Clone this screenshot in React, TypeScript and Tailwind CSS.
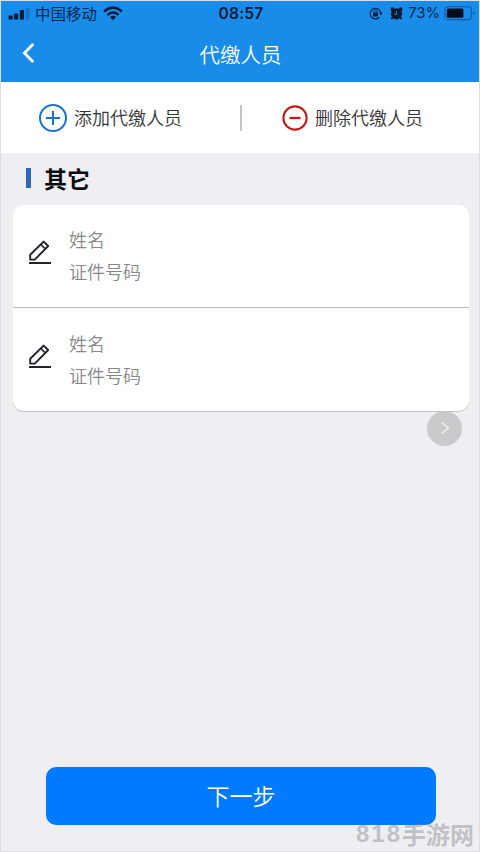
interface Person {
  id: number;
  name: string;
  idNumber: string;
}

const people: Person[] = [
  { id: 1, name: '姓名', idNumber: '证件号码' },
  { id: 2, name: '姓名', idNumber: '证件号码' },
];

function SignalIcon() {
  return (
    <svg width="22" height="12" viewBox="0 0 22 12" className="shrink-0">
      <rect x="0.5" y="7.5" width="4.2" height="4" rx="0.6" fill="#061a3a" />
      <rect x="6" y="5.5" width="4.2" height="6" rx="0.6" fill="#061a3a" />
      <rect x="11.8" y="2" width="4.2" height="9.5" rx="0.6" fill="#061a3a" />
      <rect x="17.8" y="0.3" width="3.4" height="11.2" rx="0.6" fill="#1672c4" />
    </svg>
  );
}

function WifiIcon() {
  return (
    <svg width="20" height="15" viewBox="0 0 20 15" fill="none" stroke="#061a3a" className="shrink-0">
      <path d="M1.2 5.6 C6 0.3 14 0.3 18.8 5.6" strokeWidth="2.5" />
      <path d="M4.4 9 C7.6 5.6 12.4 5.6 15.6 9" strokeWidth="2.4" />
      <path d="M10 14.3 L6.9 11.1 C8.6 9.4 11.4 9.4 13.1 11.1 Z" fill="#061a3a" stroke="none" />
    </svg>
  );
}

function RotationLockIcon() {
  return (
    <svg width="14" height="13" viewBox="0 0 14 13" fill="none" stroke="#0a2546" className="shrink-0">
      <path d="M10.4 10.3 A5.3 5.3 0 1 1 11.8 6.2" strokeWidth="1.3" />
      <path d="M9.8 5.6 H13.8 L11.8 8.6 Z" fill="#0a2546" stroke="none" />
      <rect x="4" y="5.5" width="5" height="3.9" rx="0.5" fill="#0a2546" stroke="none" />
      <path d="M5 6 V4.7 A1.5 1.5 0 0 1 8 4.7 V6" strokeWidth="1" />
    </svg>
  );
}

function AlarmIcon() {
  return (
    <svg width="13" height="13" viewBox="0 0 13 13" className="shrink-0">
      <circle cx="6.5" cy="6.8" r="5.6" fill="#051a30" />
      <circle cx="2.4" cy="2.2" r="1.9" fill="#051a30" />
      <circle cx="10.6" cy="2.2" r="1.9" fill="#051a30" />
      <path d="M2.6 10.4 L1.4 12.3 M10.4 10.4 L11.6 12.3" stroke="#051a30" strokeWidth="1.7" />
      <path d="M6.6 4 V7.2 H4" fill="none" stroke="#5d91bd" strokeWidth="0.9" />
    </svg>
  );
}

function BatteryIcon() {
  return (
    <svg width="32" height="15" viewBox="0 0 32 15" className="shrink-0">
      <rect x="0.8" y="0.8" width="26.6" height="12.8" rx="3.4" fill="none" stroke="#135b9f" strokeWidth="1.1" />
      <rect x="2.8" y="2.6" width="16.6" height="9.2" rx="1.4" fill="#010c1c" />
      <path d="M29.2 5.1 C31 5.8 31 8.4 29.2 9.2 Z" fill="#135b9f" />
    </svg>
  );
}

function EditIcon() {
  return (
    <svg width="24" height="26" viewBox="0 0 24 26" fill="none" stroke="#23232b" className="shrink-0">
      <path d="M2.2 20.6 V15.8 L15.6 2.6 L20.2 7 L6.8 20.6 Z" strokeWidth="1.9" strokeLinejoin="round" />
      <path d="M12.8 5.4 L17.2 9.8" strokeWidth="1.6" />
      <path d="M1 24 H23" strokeWidth="2" />
    </svg>
  );
}

function StatusBar() {
  return (
    <div className="grid h-[25px] grid-cols-[1fr_auto_1fr] items-center pr-[3px] pl-[7px] text-[15px] leading-none text-[#07264d]">
      <div className="flex items-center">
        <SignalIcon />
        <span className="ml-[5px] text-[15.5px]">中国移动</span>
        <span className="ml-[6px]">
          <WifiIcon />
        </span>
      </div>
      <span className="mr-[2px] font-[Inter] text-[15.5px] font-semibold tracking-[0.2px] text-[#061a3a]">
        08:57
      </span>
      <div className="flex items-center justify-end">
        <RotationLockIcon />
        <span className="ml-[7px]">
          <AlarmIcon />
        </span>
        <span className="ml-[5px] font-[Inter] text-[14.8px]">73%</span>
        <span className="ml-[4px]">
          <BatteryIcon />
        </span>
      </div>
    </div>
  );
}

function Header() {
  return (
    <header className="h-[81px] bg-[#198cea]">
      <StatusBar />
      <div className="grid h-[56px] grid-cols-[1fr_auto_1fr] items-center">
        <svg width="14" height="22" viewBox="0 0 14 22" fill="none" className="mb-[2px] ml-[20px]">
          <path d="M12.2 2 L3.4 11 L12.2 20" stroke="#fff" strokeWidth="2.8" />
        </svg>
        <h1 className="ml-[1px] text-[20.5px] leading-none font-[350] text-white">代缴人员</h1>
      </div>
    </header>
  );
}

function Actions() {
  return (
    <div className="flex h-[71px] items-center bg-white text-[18px] leading-none font-[350] text-[#333]">
      <button type="button" className="flex w-[239px] items-center pl-[38px]">
        <svg width="28" height="28" viewBox="0 0 28 28" fill="none" stroke="#1a74cf" strokeWidth="2">
          <circle cx="14" cy="14" r="13" />
          <path d="M7 14 H21 M14 7 V21" />
        </svg>
        <span className="mb-[2px] ml-[7px]">添加代缴人员</span>
      </button>
      <span className="h-[26px] w-[2px] bg-[#c4c4c4]" />
      <button type="button" className="flex items-center pl-[40px]">
        <svg width="26" height="26" viewBox="0 0 26 26" fill="none" stroke="#be1e1a" strokeWidth="2.1">
          <circle cx="13" cy="13" r="11.6" />
          <path d="M7.5 13 H18.5" strokeWidth="2.3" />
        </svg>
        <span className="mb-[2px] ml-[7px]">删除代缴人员</span>
      </button>
    </div>
  );
}

function PersonRow({ person }: { person: Person }) {
  return (
    <li className="flex h-[103px] items-center pb-[2px] pl-[15px]">
      <span className="mb-[6px]">
        <EditIcon />
      </span>
      <div className="ml-[17px] text-[18px] leading-[32px] font-[350] text-[#888]">
        <p>{person.name}</p>
        <p>{person.idNumber}</p>
      </div>
    </li>
  );
}

export default function App() {
  return (
    <div className="flex h-[852px] w-[480px] flex-col border border-[#dcdde0] bg-[#eeeef3] font-['Noto_Sans_CJK_SC',sans-serif]">
      <Header />
      <Actions />

      {/* Section title */}
      <div className="flex h-[52px] items-center pl-[25px]">
        <span className="mb-[3px] h-[20px] w-[5px] bg-[#2f68b8]" />
        <h2 className="mb-[2px] ml-[13px] text-[23px] leading-none font-bold text-[#0c0c10]">其它</h2>
      </div>

      {/* Person list */}
      <div className="relative mr-[10px] ml-[12px]">
        <ul className="divide-y divide-[#b9b9bc] rounded-[10px] bg-white shadow-[0_1px_0_#c4c4c8]">
          {people.map((person) => (
            <PersonRow key={person.id} person={person} />
          ))}
        </ul>
        <button
          type="button"
          className="absolute right-[7px] -bottom-[35px] flex size-[35px] items-center justify-center rounded-full bg-[#cacacc] pb-px"
        >
          <svg width="10" height="14" viewBox="0 0 10 14" fill="none" stroke="#f0f0f3" strokeWidth="1.3">
            <path d="M1.5 1.5 L8.5 7 L1.5 12.5" />
          </svg>
        </button>
      </div>

      {/* Footer */}
      <div className="relative mt-auto pr-[43px] pb-[26px] pl-[45px]">
        <button
          type="button"
          className="h-[58px] w-full rounded-[10px] bg-[#007aff] pb-[2px] text-[23px] leading-none font-[350] text-white"
        >
          下一步
        </button>
        <span className="absolute right-[5px] bottom-[5px] flex items-center text-[24px] leading-none font-bold text-[#88888c]/45">
          <span className="font-['Liberation_Sans'] tracking-[2px]">818</span>
          手游网
        </span>
      </div>
    </div>
  );
}
